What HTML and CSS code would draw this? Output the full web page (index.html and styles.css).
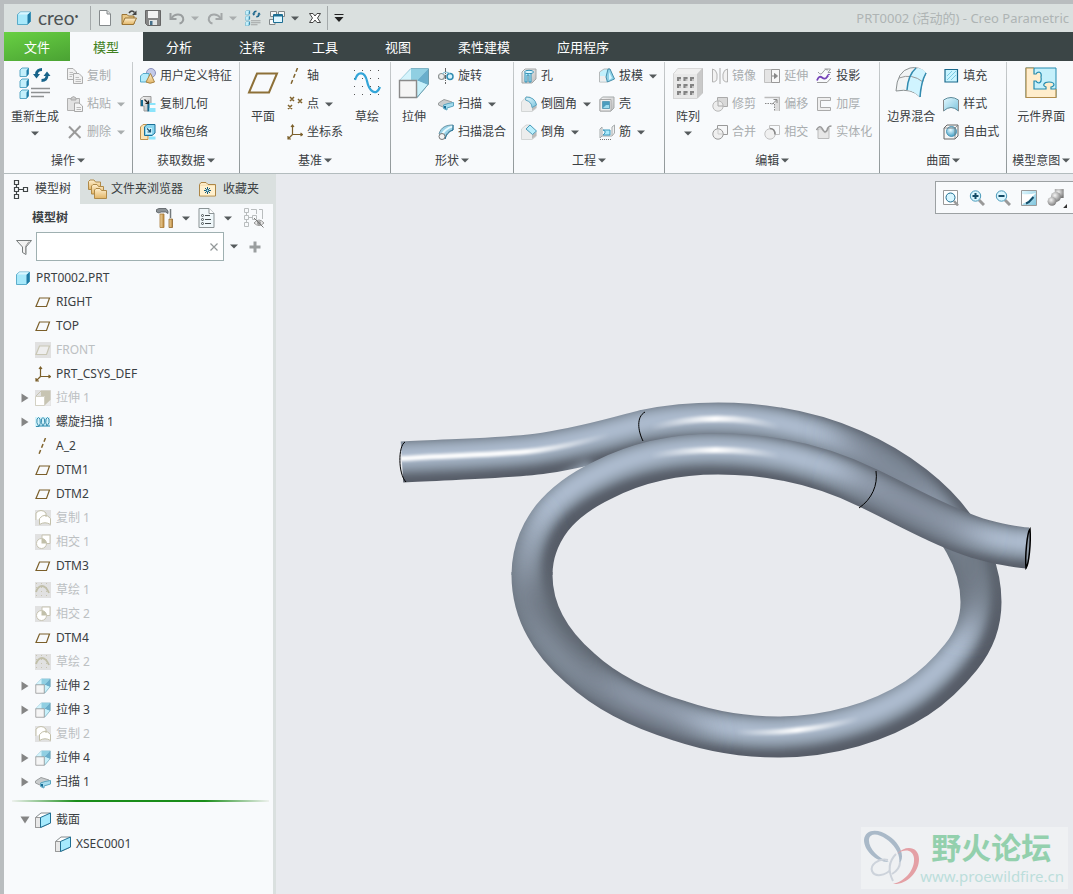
FILE: index.html
```html
<!DOCTYPE html>
<html lang="zh-CN">
<head>
    <meta charset="UTF-8">
    <meta name="viewport" content="width=device-width, initial-scale=1.0">
    <title>PRT0002 (活动的) - Creo Parametric</title>
    <link rel="stylesheet" href="styles.css">
</head>
<body>
    <!-- icon set -->
    <svg class="icon-defs" aria-hidden="true">
        <defs>
            <linearGradient id="gBlue" x1="0" y1="0" x2="1" y2="1"><stop offset="0" stop-color="#e4f9ff"/><stop offset="1" stop-color="#7cc4dd"/></linearGradient>
            <linearGradient id="gGrey" x1="0" y1="0" x2="1" y2="1"><stop offset="0" stop-color="#f6f6f6"/><stop offset="1" stop-color="#bdbdbd"/></linearGradient>
            <linearGradient id="gGold" x1="0" y1="0" x2="0" y2="1"><stop offset="0" stop-color="#fff0d0"/><stop offset="1" stop-color="#e2b566"/></linearGradient>
            <linearGradient id="gWood" x1="0" y1="0" x2="1" y2="0"><stop offset="0" stop-color="#f6dca6"/><stop offset="1" stop-color="#b8853a"/></linearGradient>
            <radialGradient id="gBall" cx=".4" cy=".35" r=".7"><stop offset="0" stop-color="#f4f4f4"/><stop offset="1" stop-color="#777"/></radialGradient>
            <radialGradient id="gAqua" cx=".4" cy=".35" r=".7"><stop offset="0" stop-color="#eafaff"/><stop offset="1" stop-color="#3b9cc4"/></radialGradient>
        </defs>
        <symbol id="i-cube" viewBox="0 0 16 16"><path d="M1.500 4.500L4.500 2H14.500V11.500L11.500 14.500H1.500z" fill="#a8e9fb" stroke="#3f9cbf" stroke-width=".8"/><path d="M11.500 4.500V14.500L14.500 11.500V2z" fill="#1f7ba5"/><path d="M2 4.500L4.700 2.300H14L11.500 4.500z" fill="#d9f6ff"/></symbol>
        <symbol id="i-new" viewBox="0 0 16 16"><path d="M2.500.5H10L13.500 4V15.500H2.500z" fill="#fff" stroke="#858a8c"/><path d="M10 .5V4H13.500" fill="#ddd" stroke="#858a8c"/></symbol>
        <symbol id="i-open" viewBox="0 0 16 16"><path d="M1 14V4.500H6L7.500 6H13V14z" fill="#e9c98a" stroke="#9b7434"/><path d="M1 14.500L4 8H15.500L12.500 14.500z" fill="url(#gGold)" stroke="#9b7434"/><path d="M8 3C10 0 12 .5 13.500 2.500" fill="none" stroke="#444" stroke-width="1.500"/><path d="M15.500 .5V5H11z" fill="#444"/></symbol>
        <symbol id="i-save" viewBox="0 0 16 16"><path d="M.5 .5H15.500V15.500H2.500L.5 13.500z" fill="#858585" stroke="#666"/><path d="M3 1H13V8H3z" fill="#f2f2f2"/><path d="M4 10H12V15H4z" fill="#e0e4e5"/><path d="M5 11H7.500V15H5z" fill="#45708a"/></symbol>
        <symbol id="i-undo" viewBox="0 0 16 16"><path d="M1.500 3V9H7.500" fill="none" stroke="#9a9e9f" stroke-width="2"/><path d="M2.500 8C6 3.500 12 3.500 14 7.500C15 10.500 13 13 10.500 13.500" fill="none" stroke="#9a9e9f" stroke-width="2"/></symbol>
        <symbol id="i-redo" viewBox="0 0 16 16"><path d="M14.500 3V9H8.500" fill="none" stroke="#a3a7a8" stroke-width="2"/><path d="M13.500 8C10 3.500 4 3.500 2 7.500C1 10.500 3 13 5.500 13.500" fill="none" stroke="#a3a7a8" stroke-width="2"/></symbol>
        <symbol id="i-regen" viewBox="0 0 32 32"><g fill="#c3f0fc" stroke="#4a9fbf" stroke-width=".9"><path d="M1 3L3 1H9.500V7L7.500 9.500H1z"/><path d="M1 14L3 12H9.500V18L7.500 20.500H1z"/><path d="M1 25L3 23H9.500V29L7.500 31.500H1z"/></g><path d="M7.500 3.500L9.500 1V7L7.500 9.500zM7.500 14.500L9.500 12V18L7.500 20.500zM7.500 25.500L9.500 23V29L7.500 31.500z" fill="#1f7ba5"/><path d="M17.500 7.500C17.500 4 20 2.500 23 2.500M28 8.500C28 12 25.500 13.500 22.500 13.500" fill="none" stroke="#17638a" stroke-width="2.800"/><path d="M14 7H21L17.500 11.500zM24.500 9H31.500L28 4.500z" fill="#17638a"/><path d="M12 21.500H31M12 25.500H31M12 29.500H25" stroke="#8e9192" stroke-width="1.500"/></symbol>
        <symbol id="i-windows" viewBox="0 0 16 16"><g fill="#f6f6f6" stroke="#818789"><path d="M1.500 1.500H7.500V6.500H1.500zM9.500 1.500H15.500V6.500H9.500zM.5 9.500H6V14.500H.5z"/></g><path d="M4.500 4.500H13.500V12.500H4.500z" fill="#dff6ff" stroke="#1c6d92"/><path d="M5 5H13V6.500H5z" fill="#1c6d92"/></symbol>
        <symbol id="i-close" viewBox="0 0 16 16"><path d="M2.500 3.500H6L8 6L10 3.500H13.500L10.500 8L13.500 12.500H10L8 10L6 12.500H2.500L5.500 8z" fill="#fff" stroke="#444"/></symbol>
        <symbol id="i-more" viewBox="0 0 10 10"><path d="M.5 1.500H9.500" stroke="#222"/><path d="M.5 4H9.500L5 9z" fill="#222"/></symbol>
        <symbol id="i-copy" viewBox="0 0 16 16"><g fill="#f1f1f1" stroke="#adadad"><path d="M.5 .5H6L9.500 4V11.500H.5z"/><path d="M6.500 5.500H12L15.500 9V15.500H6.500z"/></g><path d="M2.500 4.500H6M2.500 6.500H6M2.500 8.500H5M8.500 9.500H12M8.500 11.500H14M8.500 13.500H14" stroke="#bdbdbd"/></symbol>
        <symbol id="i-paste" viewBox="0 0 16 16"><path d="M.5 2.500H12.500V14.500H.5z" fill="#e2e2e2" stroke="#b0b0b0"/><path d="M4 4V2L6.500 .5L9 2V4z" fill="#ccc" stroke="#aaa"/><path d="M7.500 7H12L15.500 10V15.500H7.500z" fill="#f5f5f5" stroke="#a8a8a8"/><path d="M9.500 11.500H14M9.500 13.500H14" stroke="#bbb"/></symbol>
        <symbol id="i-delete" viewBox="0 0 16 16"><path d="M2 2.500L13.500 14M13.500 2L2 14" stroke="#9a9a9a" stroke-width="2"/></symbol>
        <symbol id="i-udf" viewBox="0 0 16 16"><circle cx="11" cy="5" r="4.500" fill="#c3cae9" stroke="#8c92bd"/><path d="M.5 8L3 5.500H9V12L7 14H.5z" fill="#b4ebfb" stroke="#55a9c8"/><path d="M10.500 5.500L14.500 14Q10 16.500 6 14z" fill="url(#gGold)" stroke="#a98545"/></symbol>
        <symbol id="i-copygeo" viewBox="0 0 16 16"><path d="M.5 3L3 .5H11V8.500H8V15H4V10H.5z" fill="url(#gGrey)" stroke="#9b9b9b"/><path d="M1 4H3V10H1zM7.500 6.500H9.500V15.500H7.500z" fill="#14688f"/><path d="M9.500 7H15.500V9H9.500zM9.500 12H15.500V16H9.500z" fill="#8be4fb"/><path d="M4.500 3.500L8.500 7.500M8.500 4.500V7.500H5.500" fill="none" stroke="#222" stroke-width="1.200"/></symbol>
        <symbol id="i-shrink" viewBox="0 0 16 16"><path d="M.5 3L3 .5H8V15.500H.5z" fill="#fbe3b4" stroke="#bd934e"/><path d="M4.500 3L7 .5H15V9L12 11.500H4.500z" fill="#8ad6ef" stroke="#1b7098"/><path d="M6 4H12V10H6z" fill="#d0f3fd"/><path d="M7 4.500L10.500 8M10.500 5V8H7.500" fill="none" stroke="#1b5878" stroke-width="1.200"/><path d="M9 12.500H15.500V15.500H9z" fill="#8be4fb"/></symbol>
        <symbol id="i-plane" viewBox="0 0 32 32"><path d="M10 6.500H30L22 25.500H2z" fill="#f8fafc" stroke="#8d7038" stroke-width="2"/></symbol>
        <symbol id="i-datum" viewBox="0 0 16 16"><path d="M4.500 4H14.500L11.500 12.500H1z" fill="#f8fafc" stroke="#7b5f2a" stroke-width="1.200"/></symbol>
        <symbol id="i-axis" viewBox="0 0 16 16"><path d="M10.500 0L4 16" stroke="#80632d" stroke-width="1.500" stroke-dasharray="4 2.500"/></symbol>
        <symbol id="i-points" viewBox="0 0 16 16"><path d="M3 1L7 5M7 1L3 5M11 3L15 7M15 3L11 7M1 9L5 13M5 9L1 13" stroke="#80632d" stroke-width="1.500"/></symbol>
        <symbol id="i-csys" viewBox="0 0 16 16"><path d="M5.500 1V10.500H15M5.500 10.500L1 15M4 3L5.500 1L7 3M13.500 9L15.500 10.500L13.500 12M1 12V15H4" fill="none" stroke="#7b5f2a" stroke-width="1.200"/></symbol>
        <symbol id="i-sketch" viewBox="0 0 32 32"><path d="M3.500 3V31M11.500 3V31M19.500 3V31M27.500 3V31" stroke="#555" stroke-dasharray="1 7"/><path d="M4 13C7 3 14 5 16 14C18 24 25 30 29 20" fill="none" stroke="#33a5d8" stroke-width="2.200"/></symbol>
        <symbol id="i-extrude" viewBox="0 0 32 32"><path d="M1.500 13.500L13 1.500H30.500V17L19 30.500V13.500z" fill="#c8f1fb" stroke="#7fb4c6"/><path d="M1.500 13.500L13 2H30L19 13.500z" fill="#90cfe2"/><path d="M1.500 13.500L13 2V13.500z" fill="#d5f4fc"/><path d="M19 13.500L30 2V18z" fill="#69aecb"/><path d="M19 13.500L30 18L19.500 30z" fill="#c8f1fb"/><path d="M30.500 2V17L19 30.500" fill="none" stroke="#6d9dad"/><path d="M1.500 13.500H18.500V30.500H1.500z" fill="#f5f5f5" stroke="#8a8a8a" stroke-width="1.400"/></symbol>
        <symbol id="i-revolve" viewBox="0 0 16 16"><circle cx="3.500" cy="8.500" r="3" fill="#eee" stroke="#8e9494" stroke-width="1.200"/><circle cx="12" cy="8.500" r="3" fill="#d8f5ff" stroke="#328cb1" stroke-width="1.500"/><path d="M4 6Q8 2 12 6" fill="none" stroke="#7cb9cf"/><path d="M7.500 0V16" stroke="#666" stroke-dasharray="4 1 1 1"/></symbol>
        <symbol id="i-sweep" viewBox="0 0 16 16"><path d="M.5 7L6 3.500L14 6V9L11 8L6 9L6 11.500L.5 9z" fill="#c9cccd" stroke="#9a9d9e"/><path d="M5.500 9L10 7.500L15.500 6.500V10L9 12V14L5.500 12.500z" fill="#a5dcee" stroke="#5aa5c0"/><path d="M6 10H8V13L6 12z" fill="#176b94"/></symbol>
        <symbol id="i-blend" viewBox="0 0 16 16"><path d="M1 10C3 3 8 1 15 1V6C11 7 8 9 7 15z" fill="#9bd3e8" stroke="#6b95a6"/><path d="M3 10Q6 4 14.500 1.500V3.500Q8 5 5 11z" fill="#e9fbff"/><path d="M15 1V6Q9 8 7 15" fill="none" stroke="#1f6f94"/><circle cx="4" cy="12.500" r="3" fill="#f4f4f4" stroke="#777"/></symbol>
        <symbol id="i-hole" viewBox="0 0 16 16"><path d="M1 4L4 1H15V11L11 15H1z" fill="url(#gGrey)" stroke="#a4a7a7"/><path d="M4 14V5H10V14H8V7H6V14z" fill="#bff1ff" stroke="#318fb5"/><ellipse cx="8" cy="4" rx="4.500" ry="1.700" fill="#dff8ff" stroke="#318fb5"/></symbol>
        <symbol id="i-round" viewBox="0 0 16 16"><path d="M.5 6L5 1H9L15.500 8V12L11 15.500H.5z" fill="#eceded" stroke="#d3d6d6"/><path d="M11 10L15 9V12L11 15z" fill="#bbb"/><path d="M5 1Q14 1 15.500 9L11 11.500Q11 6 4.500 4z" fill="url(#gBlue)" stroke="#5ba6c2"/></symbol>
        <symbol id="i-chamfer" viewBox="0 0 16 16"><path d="M.5 5L5 1H9L15.500 8V12L11 15.500H.5z" fill="#eceded" stroke="#d3d6d6"/><path d="M11 11L15 8V12L11 15z" fill="#bbb"/><path d="M9 1L15.500 7L11.500 10.500L5 5z" fill="#b9effd" stroke="#4b9cbb"/></symbol>
        <symbol id="i-draft" viewBox="0 0 16 16"><path d="M.5 13V4L5 1H11V12L8 14H.5z" fill="#c2f0fc" stroke="#b5b9ba"/><path d="M1 8H7V13.500H1z" fill="#eee"/><path d="M9 1H11L15.500 11L8.500 14L7 9z" fill="#8fd2e8" stroke="#468eaa"/><path d="M10 4V12L13 10z" fill="#d8f7ff"/></symbol>
        <symbol id="i-shell" viewBox="0 0 16 16"><path d="M1 3.500L3.500 1H15V12L12 15H1z" fill="url(#gGrey)" stroke="#a5aaab"/><path d="M1 3.500H12V15H1z" fill="#eee" stroke="#aaa"/><path d="M3.500 5.500H10.500V12.500H3.500z" fill="#4b9cbe" stroke="#5f9fb9"/><path d="M7 9H10V12H4z" fill="#9cdcf0"/></symbol>
        <symbol id="i-rib" viewBox="0 0 16 16"><path d="M1 5L3 3V12L1 14zM3 12H13L15.500 9V1L13 3V11" fill="#f2f2f2" stroke="#a5aaab"/><path d="M4 6H11V11H4L6 9V7z" fill="#aaeafc" stroke="#3998bc"/><path d="M1 15.500H12" stroke="#777" stroke-dasharray="1 1"/></symbol>
        <symbol id="i-pattern" viewBox="0 0 32 32"><path d="M1.500 7L6 1.500H30.500V26L25 31.500H1.500z" fill="#c9c9c9" stroke="#c2c2c2"/><path d="M1.500 7H25V31.500H1.500z" fill="#e8e8e8"/><path d="M1.500 7L6 1.500H30L25 7z" fill="#f0f0f0"/><g fill="#c2c2c2"><path d="M5 10h4v4h-4zM11.500 10h4v4h-4zM18 10h4v4h-4zM5 17h4v4h-4zM11.500 17h4v4h-4zM18 17h4v4h-4zM5 24h4v4h-4zM11.500 24h4v4h-4zM18 24h4v4h-4z"/></g><g fill="#838383"><path d="M5 10h4v2h-2v2h-2zM11.500 10h4v2h-2v2h-2zM18 10h4v2h-2v2h-2zM5 17h4v2h-2v2h-2zM11.500 17h4v2h-2v2h-2zM18 17h4v2h-2v2h-2zM5 24h4v2h-2v2h-2zM11.500 24h4v2h-2v2h-2zM18 24h4v2h-2v2h-2z"/></g></symbol>
        <symbol id="i-mirror" viewBox="0 0 16 16"><path d="M.5 1V14Q5 14 5 10V6Q4 1.500 .5 1zM15.500 1V14Q11 14 11 10V6Q12 1.500 15.500 1z" fill="#f2f2f2" stroke="#b3b3b3"/><path d="M8 0V16" stroke="#aaa"/></symbol>
        <symbol id="i-trim" viewBox="0 0 16 16"><path d="M5.500 1.500H15.500V10.500H5.500z" fill="#d9d9d9" stroke="#aaa"/><circle cx="6" cy="10" r="5.200" fill="#ededed" stroke="#b8b8b8"/><path d="M6 5V10H11" fill="none" stroke="#aaa"/></symbol>
        <symbol id="i-merge" viewBox="0 0 16 16"><path d="M5.500 1.500H15.500V10.500H5.500z" fill="#f6f7f8" stroke="#999"/><circle cx="6" cy="10" r="5.200" fill="#f0f0f0" stroke="#999"/><path d="M6 5V10H11" fill="none" stroke="#ccc"/></symbol>
        <symbol id="i-extend" viewBox="0 0 16 16"><path d="M.5 1.500H15.500V14.500H.5z" fill="#e4e4e4" stroke="#c0c0c0"/><path d="M7.500 1.500H15.500V14.500H7.500z" fill="#f8f8f8" stroke="#999"/><path d="M8 8H11M10.500 5.500L13.500 8L10.500 10.500z" fill="#888" stroke="#888"/></symbol>
        <symbol id="i-offset" viewBox="0 0 16 16"><path d="M.5 1.500H15.500V15" fill="none" stroke="#bbb" stroke-width="1.500"/><path d="M11 5L15 2V15H11z" fill="#ddd"/><path d="M1 7.500H10.500V15" fill="none" stroke="#888" stroke-dasharray="1.500 1"/><path d="M8 8.500L12.500 4M9.500 3.500H13V7" fill="none" stroke="#888"/></symbol>
        <symbol id="i-intersect" viewBox="0 0 16 16"><path d="M5.500 1.500H15.500V10.500H5.500z" fill="none" stroke="#c2c2c2"/><circle cx="6" cy="10" r="5.200" fill="#f0f0f0" stroke="#c2c2c2"/><path d="M6 4.500Q11 4.500 11 10.500" fill="none" stroke="#888" stroke-width="1.500"/></symbol>
        <symbol id="i-project" viewBox="0 0 16 16"><path d="M2 4Q5 8 7 4T12 2M8.500 1H14.500L12 4.500H15" fill="none" stroke="#9a9d9e"/><path d="M1 12.500Q3 7 6 9.500T11 9T13 7" fill="none" stroke="#7442b8" stroke-width="1.800"/><path d="M1 14.500H11L15 10" fill="none" stroke="#999"/></symbol>
        <symbol id="i-thicken" viewBox="0 0 16 16"><path d="M14.500 1.500H1.500V14.500H14.500V11.500H4.500V4.500H14.500z" fill="#efefef" stroke="#aaa"/></symbol>
        <symbol id="i-solidify" viewBox="0 0 16 16"><path d="M2 6Q5 3 7 7T12 6L13 4V14.500H2z" fill="#e7e7e7" stroke="#bbb"/><path d="M.5 6Q4 0 6.500 5T11 6Q12 2 15.500 2" fill="none" stroke="#999" stroke-width="1.600"/></symbol>
        <symbol id="i-boundary" viewBox="0 0 32 32"><path d="M1 24Q2 4 15 1Q24 -1 31 6Q26 15 25 30Q17 21 1 24z" fill="#f2f4f5" stroke="#8b9192"/><path d="M15 10Q19 3 23 1Q29 2 31 6Q26 15 25 30Q19 24 12 23Q12 15 15 10z" fill="#d0f4ff"/><path d="M4 11Q17 6 28 15" fill="none" stroke="#999"/><path d="M12 23Q13 8 21 1M31 6Q26 15 25 30" fill="none" stroke="#318bb0" stroke-width="1.500"/></symbol>
        <symbol id="i-fill" viewBox="0 0 16 16"><path d="M2 1.500H14.500V14H2z" fill="#c8f4ff" stroke="#19688b" stroke-width="1.200"/><path d="M4 8L9 3M4 12L13 3M8 12L13 7" stroke="#7ccbe3"/></symbol>
        <symbol id="i-style" viewBox="0 0 16 16"><path d="M.5 4Q8-1 15.500 4V15Q8 8 .5 15z" fill="url(#gBlue)" stroke="#5c8999"/><path d="M.5 4V15M15.500 4V15" stroke="#888"/></symbol>
        <symbol id="i-freestyle" viewBox="0 0 16 16"><path d="M1 4L4 1H15V12L12 15H1z" fill="#f5f5f5" stroke="#666"/><circle cx="8.500" cy="7.500" r="5" fill="url(#gAqua)" stroke="#3489ad" stroke-width=".8"/><path d="M1 4H12V15M12 4L15 1" fill="none" stroke="#777" stroke-width=".8"/></symbol>
        <symbol id="i-puzzle" viewBox="0 0 32 32"><path d="M1 1H31V30.500H1z" fill="#c5f0fb" stroke="#238aaf"/><path d="M1 1H9V6H11Q16 4 16 10Q16 16 11 14H9V22H20V20Q17 15 23 15Q30 15 27 20V22H31V30.500H1z" fill="#ffedcc"/><path d="M9 1V7H11Q12 5 14 5Q17 6 16 10Q17 15 14 16Q12 16 11 14H9V22H21V20Q18 19 19 17Q20 15 24 15Q29 15 29 18Q28 20 26 20V22H31" fill="none" stroke="#238aaf" stroke-width="1.200"/><path d="M9 1H1V30.500H31V22" fill="none" stroke="#b28d4c" stroke-width="1.200"/></symbol>
        <symbol id="i-refit" viewBox="0 0 16 16"><path d="M.5 .5H14.500V14.500H.5z" fill="#fff" stroke="#999"/><path d="M11 11L15 15.500" stroke="#999" stroke-width="2.500"/><circle cx="7.500" cy="7.500" r="4.500" fill="#d9f6ff" stroke="#1d6d90"/></symbol>
        <symbol id="i-zoomin" viewBox="0 0 16 16"><path d="M10 10L15 15" stroke="#999" stroke-width="3"/><circle cx="6.500" cy="6" r="5.200" fill="#d9f6ff" stroke="#4b9bbb"/><path d="M3.500 6H9.500M6.500 3V9" stroke="#134b66" stroke-width="2"/></symbol>
        <symbol id="i-zoomout" viewBox="0 0 16 16"><path d="M10 10L15 15" stroke="#999" stroke-width="3"/><circle cx="6.500" cy="6" r="5.200" fill="#d9f6ff" stroke="#4b9bbb"/><path d="M3.500 6H9.500" stroke="#134b66" stroke-width="2"/></symbol>
        <symbol id="i-repaint" viewBox="0 0 16 16"><path d="M.5 .5H15.500V15.500H.5z" fill="url(#gBlue)" stroke="#999"/><path d="M1 4Q8 5 15 3L11 7L5 13Q3 12 1 15z" fill="#fff"/><path d="M5 13.500L8 12L12.500 7" fill="none" stroke="#144e6b" stroke-width="2"/></symbol>
        <symbol id="i-shading" viewBox="0 0 18 18"><path d="M7 1H15V9H7z" fill="url(#gBall)"/><circle cx="8" cy="8" r="4.500" fill="url(#gBall)"/><circle cx="4.500" cy="12" r="4" fill="url(#gBall)"/><path d="M18 14.500V18H14.500z" fill="#333"/></symbol>
        <symbol id="i-tree" viewBox="0 0 16 20"><g fill="none" stroke="#3f4445" stroke-width="1.200"><path d="M1.500 1.500H5.500V5.500H1.500zM1.500 8.500H5.500V12.500H1.500zM1.500 15.500H5.500V19.500H1.500zM10.500 8.500H14.500V12.500H10.500zM3.500 5.500V8.500M3.500 12.500V15.500M5.500 10.500H10.500"/></g></symbol>
        <symbol id="i-folders" viewBox="0 0 20 20"><g fill="url(#gGold)" stroke="#b08a48"><path d="M.5 2.500L2 1H6L7.500 3H12.500V10.500H.5z"/><path d="M3.500 7L5 5.500H9L10.500 7.500H15.500V15H3.500z"/><path d="M6.500 11L8 9.500H12L13.500 11.500H18.500V19.500H6.500z"/></g></symbol>
        <symbol id="i-favorite" viewBox="0 0 18 18"><path d="M.5 4.500L2 2.500H7L9 4.500H16.500V16H.5z" fill="url(#gGold)" stroke="#ad8646"/><path d="M1 6H16V15.500H1z" fill="#fff0ce"/><path d="M5 10.500H12M8.500 7V14M6 8L11 13M11 8L6 13" stroke="#145b7c"/><circle cx="8.500" cy="10.500" r="1" fill="#bff1ff"/></symbol>
        <symbol id="i-settings" viewBox="0 0 18 20"><path d="M.5 1.500L3 .5H10L12 3V5.500L9.500 4H5L3 5L.5 4z" fill="#8c9296" stroke="#555c60" stroke-width=".8"/><path d="M4 6H8V19.500H4z" fill="url(#gWood)" stroke="#a87a35" stroke-width=".8"/><path d="M14.500 1V10" stroke="#73797c" stroke-width="1.500"/><path d="M13 11H16.500V19.500H13z" fill="url(#gWood)" stroke="#8f672f" stroke-width=".8"/></symbol>
        <symbol id="i-list" viewBox="0 0 18 20"><path d="M1 .5H11L16 5.500V19.500H1z" fill="#f0f8fb" stroke="#8b9395"/><path d="M11 .5V5.500H16" fill="#fff" stroke="#8b9395"/><path d="M7 7.500H12M7 11.500H13M7 15.500H13" stroke="#454d50"/><g fill="none" stroke="#454d50"><circle cx="4.500" cy="7.500" r="1"/><circle cx="4.500" cy="11.500" r="1"/><circle cx="4.500" cy="15.500" r="1"/></g></symbol>
        <symbol id="i-hide" viewBox="0 0 20 20"><g fill="none" stroke="#b9bdbe"><path d="M.5 .5H4.500V4.500H.5zM.5 7.500H4.500V11.500H.5zM.5 14.500H4.500V18.500H.5zM8.500 7.500H12.500V11.500H8.500zM2.500 5V7M2.500 12V14M4.500 9.500H8.500M7 1.500H12.500V6M15 1.500H18.500V11"/></g><path d="M10 15Q15 9 20 15Q15 20 10 15z" fill="#e6e6e6" stroke="#999"/><circle cx="15" cy="15" r="2" fill="#999"/><path d="M10 10L19.500 19.500" stroke="#777"/></symbol>
        <symbol id="i-filter" viewBox="0 0 16 16"><path d="M.5 1.500H15.500L10 8V15.500L6.500 13.500V8z" fill="#f2f2f2" stroke="#777c7d"/><path d="M13 2.500L9.500 7.500V14" fill="none" stroke="#999"/></symbol>
        <symbol id="i-clear" viewBox="0 0 10 10"><path d="M1.500 1.500L8.500 8.500M8.500 1.500L1.500 8.500" stroke="#929899" stroke-width="1.200"/></symbol>
        <symbol id="i-plus" viewBox="0 0 12 12"><path d="M6 .5V11.500M.5 6H11.500" stroke="#9a9e9f" stroke-width="3"/></symbol>
        <symbol id="i-arrow" viewBox="0 0 8 5"><path d="M0 .5H8L4 4.500z" fill="currentColor"/></symbol>
        <symbol id="i-expand" viewBox="0 0 10 10"><path d="M1.500 .5V9.500L8.500 5z" fill="#858585"/></symbol>
        <symbol id="i-collapse" viewBox="0 0 10 10"><path d="M.5 1.500H9.500L5 8.500z" fill="#858585"/></symbol>
        <symbol id="i-datum-off" viewBox="0 0 16 16"><path d="M0 0H16V16H0z" fill="#e1e1e1"/><path d="M4.500 4H14.500L11.500 12.500H1z" fill="#eee" stroke="#c9c7b5" stroke-width="1.200"/></symbol>
        <symbol id="i-extrude-off" viewBox="0 0 16 16"><path d="M0 0H16V16H0z" fill="#e1e1e1"/><path d="M6 .5H15.500V10L10 15V6H6z" fill="#c7c4b2"/><path d="M10 15.500L15.500 10V15.500z" fill="#ececec"/><path d="M1 6L6 1" stroke="#c7c4b2"/><path d="M.5 6.500H9.500V15.500H.5z" fill="#fff" stroke="#d3d1c4"/></symbol>
        <symbol id="i-copy-off" viewBox="0 0 16 16"><path d="M0 0H16V16H0z" fill="#e1e1e1"/><path d="M1 10V3Q6-2 11 3V7M4.500 14.500V8.500Q10 2 15.500 8.500V14.500Q10 11 4.500 14.500z" fill="#fff" stroke="#c2bfa9"/></symbol>
        <symbol id="i-intersect-off" viewBox="0 0 16 16"><path d="M0 0H16V16H0z" fill="#e1e1e1"/><path d="M7 1H15V9.500H12L7 5z" fill="#fff" stroke="#c7c4b2"/><circle cx="6.500" cy="9.500" r="5" fill="#fff" stroke="#c7c4b2"/><path d="M6.500 4.500V9.500H11.500Q11 5 6.500 4.500z" fill="#c1bfa9"/></symbol>
        <symbol id="i-sketch-off" viewBox="0 0 16 16"><path d="M0 0H16V16H0z" fill="#e1e1e1"/><path d="M1.500 1V16M6.500 1V16M11.500 1V16" stroke="#c7c4b2" stroke-dasharray="1 3"/><path d="M1 10Q3 4 7 4T14 11" fill="none" stroke="#c1bfa9" stroke-width="1.800"/></symbol>
        <symbol id="i-helix" viewBox="0 0 16 16"><path d="M0 3H15V13H0z" fill="#d4f2fa"/><path d="M1 12.500H4Q6 10 5 5Q3.500 2 2 5Q1 9 3.500 12H8Q10.500 9 9.500 5Q8 2 6.500 5Q5.500 9 8 12H12Q15 9 14 5Q12.500 2 11 5Q10 9 12 12H15" fill="none" stroke="#388eaf"/></symbol>
        <symbol id="i-section" viewBox="0 0 16 16"><path d="M.5 5.500L6 1H15.500V11L5.500 15.500H.5z" fill="#fff" stroke="#858c8e"/><path d="M.5 5.500H5.500V15.500H.5z" fill="#e8e8e8" stroke="#999"/><path d="M5.500 5.500L15.500 1V11L5.500 15.500z" fill="#a6eafd" stroke="#206f93"/></symbol>
    </svg>

    <div class="window">
        <header class="titlebar">
            <div class="brand"><svg class="icon"><use href="#i-cube"/></svg><span class="brand-name">creo<sup>•</sup></span></div>
            <div class="quick">
                <button aria-label="新建"><svg class="icon"><use href="#i-new"/></svg></button>
                <button aria-label="打开"><svg class="icon"><use href="#i-open"/></svg></button>
                <button aria-label="保存"><svg class="icon"><use href="#i-save"/></svg></button>
                <button class="split off" aria-label="撤消"><svg class="icon"><use href="#i-undo"/></svg><svg class="arrow"><use href="#i-arrow"/></svg></button>
                <button class="split off" aria-label="重做"><svg class="icon"><use href="#i-redo"/></svg><svg class="arrow"><use href="#i-arrow"/></svg></button>
                <button aria-label="重新生成模型"><svg class="icon"><use href="#i-regen"/></svg></button>
                <button class="split" aria-label="窗口"><svg class="icon"><use href="#i-windows"/></svg><svg class="arrow"><use href="#i-arrow"/></svg></button>
                <button aria-label="关闭"><svg class="icon"><use href="#i-close"/></svg></button>
            </div>
            <button class="customize" aria-label="自定义"><svg class="more"><use href="#i-more"/></svg></button>
            <h1 class="doc-title">PRT0002 (活动的) - Creo Parametric</h1>
        </header>

        <nav class="tabs">
            <button class="tab file">文件</button>
            <button class="tab active">模型</button>
            <button class="tab">分析</button>
            <button class="tab">注释</button>
            <button class="tab">工具</button>
            <button class="tab">视图</button>
            <button class="tab">柔性建模</button>
            <button class="tab">应用程序</button>
        </nav>

        <section class="ribbon">
            <div class="group">
                <div class="tools">
                    <button class="big"><svg><use href="#i-regen"/></svg>重新生成<svg class="arrow"><use href="#i-arrow"/></svg></button>
                    <div class="col">
                        <button class="tool off"><svg class="icon"><use href="#i-copy"/></svg>复制</button>
                        <button class="tool off"><svg class="icon"><use href="#i-paste"/></svg>粘贴<svg class="arrow"><use href="#i-arrow"/></svg></button>
                        <button class="tool off"><svg class="icon"><use href="#i-delete"/></svg>删除<svg class="arrow"><use href="#i-arrow"/></svg></button>
                    </div>
                </div>
                <button class="group-name">操作<svg class="arrow"><use href="#i-arrow"/></svg></button>
            </div>
            <div class="group">
                <div class="tools">
                    <div class="col">
                        <button class="tool"><svg class="icon"><use href="#i-udf"/></svg>用户定义特征</button>
                        <button class="tool"><svg class="icon"><use href="#i-copygeo"/></svg>复制几何</button>
                        <button class="tool"><svg class="icon"><use href="#i-shrink"/></svg>收缩包络</button>
                    </div>
                </div>
                <button class="group-name">获取数据<svg class="arrow"><use href="#i-arrow"/></svg></button>
            </div>
            <div class="group">
                <div class="tools">
                    <button class="big"><svg><use href="#i-plane"/></svg>平面</button>
                    <div class="col">
                        <button class="tool"><svg class="icon"><use href="#i-axis"/></svg>轴</button>
                        <button class="tool"><svg class="icon"><use href="#i-points"/></svg>点<svg class="arrow"><use href="#i-arrow"/></svg></button>
                        <button class="tool"><svg class="icon"><use href="#i-csys"/></svg>坐标系</button>
                    </div>
                    <button class="big"><svg><use href="#i-sketch"/></svg>草绘</button>
                </div>
                <button class="group-name">基准<svg class="arrow"><use href="#i-arrow"/></svg></button>
            </div>
            <div class="group">
                <div class="tools">
                    <button class="big"><svg><use href="#i-extrude"/></svg>拉伸</button>
                    <div class="col">
                        <button class="tool"><svg class="icon"><use href="#i-revolve"/></svg>旋转</button>
                        <button class="tool"><svg class="icon"><use href="#i-sweep"/></svg>扫描<svg class="arrow"><use href="#i-arrow"/></svg></button>
                        <button class="tool"><svg class="icon"><use href="#i-blend"/></svg>扫描混合</button>
                    </div>
                </div>
                <button class="group-name">形状<svg class="arrow"><use href="#i-arrow"/></svg></button>
            </div>
            <div class="group">
                <div class="tools">
                    <div class="col">
                        <button class="tool"><svg class="icon"><use href="#i-hole"/></svg>孔</button>
                        <button class="tool"><svg class="icon"><use href="#i-round"/></svg>倒圆角<svg class="arrow"><use href="#i-arrow"/></svg></button>
                        <button class="tool"><svg class="icon"><use href="#i-chamfer"/></svg>倒角<svg class="arrow"><use href="#i-arrow"/></svg></button>
                    </div>
                    <div class="col">
                        <button class="tool"><svg class="icon"><use href="#i-draft"/></svg>拔模<svg class="arrow"><use href="#i-arrow"/></svg></button>
                        <button class="tool"><svg class="icon"><use href="#i-shell"/></svg>壳</button>
                        <button class="tool"><svg class="icon"><use href="#i-rib"/></svg>筋<svg class="arrow"><use href="#i-arrow"/></svg></button>
                    </div>
                </div>
                <button class="group-name">工程<svg class="arrow"><use href="#i-arrow"/></svg></button>
            </div>
            <div class="group">
                <div class="tools">
                    <button class="big"><svg><use href="#i-pattern"/></svg>阵列<svg class="arrow"><use href="#i-arrow"/></svg></button>
                    <div class="col">
                        <button class="tool off"><svg class="icon"><use href="#i-mirror"/></svg>镜像</button>
                        <button class="tool off"><svg class="icon"><use href="#i-trim"/></svg>修剪</button>
                        <button class="tool off"><svg class="icon"><use href="#i-merge"/></svg>合并</button>
                    </div>
                    <div class="col">
                        <button class="tool off"><svg class="icon"><use href="#i-extend"/></svg>延伸</button>
                        <button class="tool off"><svg class="icon"><use href="#i-offset"/></svg>偏移</button>
                        <button class="tool off"><svg class="icon"><use href="#i-intersect"/></svg>相交</button>
                    </div>
                    <div class="col">
                        <button class="tool"><svg class="icon"><use href="#i-project"/></svg>投影</button>
                        <button class="tool off"><svg class="icon"><use href="#i-thicken"/></svg>加厚</button>
                        <button class="tool off"><svg class="icon"><use href="#i-solidify"/></svg>实体化</button>
                    </div>
                </div>
                <button class="group-name">编辑<svg class="arrow"><use href="#i-arrow"/></svg></button>
            </div>
            <div class="group">
                <div class="tools">
                    <button class="big"><svg><use href="#i-boundary"/></svg>边界混合</button>
                    <div class="col">
                        <button class="tool"><svg class="icon"><use href="#i-fill"/></svg>填充</button>
                        <button class="tool"><svg class="icon"><use href="#i-style"/></svg>样式</button>
                        <button class="tool"><svg class="icon"><use href="#i-freestyle"/></svg>自由式</button>
                    </div>
                </div>
                <button class="group-name">曲面<svg class="arrow"><use href="#i-arrow"/></svg></button>
            </div>
            <div class="group last">
                <div class="tools">
                    <button class="big"><svg><use href="#i-puzzle"/></svg>元件界面</button>
                </div>
                <button class="group-name">模型意图<svg class="arrow"><use href="#i-arrow"/></svg></button>
            </div>
        </section>

        <main class="workspace">
            <aside class="sidebar">
                <nav class="side-tabs">
                    <button class="side-tab active"><svg class="tree-icon"><use href="#i-tree"/></svg>模型树</button>
                    <button class="side-tab"><svg class="side-icon"><use href="#i-folders"/></svg>文件夹浏览器</button>
                    <button class="side-tab"><svg class="fav-icon"><use href="#i-favorite"/></svg>收藏夹</button>
                </nav>
                <div class="panel">
                    <div class="panel-head">
                        <h2>模型树</h2>
                        <button aria-label="设置"><svg class="side-icon"><use href="#i-settings"/></svg><svg class="arrow"><use href="#i-arrow"/></svg></button>
                        <button aria-label="显示"><svg class="side-icon"><use href="#i-list"/></svg><svg class="arrow"><use href="#i-arrow"/></svg></button>
                        <button class="hide" aria-label="隐藏"><svg class="side-icon"><use href="#i-hide"/></svg></button>
                    </div>
                    <div class="search">
                        <svg class="icon"><use href="#i-filter"/></svg>
                        <div class="search-box">
                            <input type="text" aria-label="搜索模型树">
                            <button aria-label="清除"><svg class="more"><use href="#i-clear"/></svg></button>
                        </div>
                        <button aria-label="搜索选项"><svg class="arrow"><use href="#i-arrow"/></svg></button>
                        <button aria-label="添加"><svg class="add"><use href="#i-plus"/></svg></button>
                    </div>
                    <ul class="tree">
                        <li class="root"><svg class="icon"><use href="#i-cube"/></svg>PRT0002.PRT</li>
                        <li><svg class="icon"><use href="#i-datum"/></svg>RIGHT</li>
                        <li><svg class="icon"><use href="#i-datum"/></svg>TOP</li>
                        <li class="off"><svg class="icon"><use href="#i-datum-off"/></svg>FRONT</li>
                        <li><svg class="icon"><use href="#i-csys"/></svg>PRT_CSYS_DEF</li>
                        <li class="off parent"><button aria-label="展开"><svg class="more"><use href="#i-expand"/></svg></button><svg class="icon"><use href="#i-extrude-off"/></svg>拉伸 1</li>
                        <li class="parent"><button aria-label="展开"><svg class="more"><use href="#i-expand"/></svg></button><svg class="icon"><use href="#i-helix"/></svg>螺旋扫描 1</li>
                        <li><svg class="icon"><use href="#i-axis"/></svg>A_2</li>
                        <li><svg class="icon"><use href="#i-datum"/></svg>DTM1</li>
                        <li><svg class="icon"><use href="#i-datum"/></svg>DTM2</li>
                        <li class="off"><svg class="icon"><use href="#i-copy-off"/></svg>复制 1</li>
                        <li class="off"><svg class="icon"><use href="#i-intersect-off"/></svg>相交 1</li>
                        <li><svg class="icon"><use href="#i-datum"/></svg>DTM3</li>
                        <li class="off"><svg class="icon"><use href="#i-sketch-off"/></svg>草绘 1</li>
                        <li class="off"><svg class="icon"><use href="#i-intersect-off"/></svg>相交 2</li>
                        <li><svg class="icon"><use href="#i-datum"/></svg>DTM4</li>
                        <li class="off"><svg class="icon"><use href="#i-sketch-off"/></svg>草绘 2</li>
                        <li class="parent"><button aria-label="展开"><svg class="more"><use href="#i-expand"/></svg></button><svg class="icon"><use href="#i-extrude"/></svg>拉伸 2</li>
                        <li class="parent"><button aria-label="展开"><svg class="more"><use href="#i-expand"/></svg></button><svg class="icon"><use href="#i-extrude"/></svg>拉伸 3</li>
                        <li class="off"><svg class="icon"><use href="#i-copy-off"/></svg>复制 2</li>
                        <li class="parent"><button aria-label="展开"><svg class="more"><use href="#i-expand"/></svg></button><svg class="icon"><use href="#i-extrude"/></svg>拉伸 4</li>
                        <li class="parent"><button aria-label="展开"><svg class="more"><use href="#i-expand"/></svg></button><svg class="icon"><use href="#i-sweep"/></svg>扫描 1</li>
                    </ul>
                    <hr class="insert-line">
                    <ul class="tree">
                        <li class="parent"><button aria-label="折叠"><svg class="more"><use href="#i-collapse"/></svg></button><svg class="icon"><use href="#i-section"/></svg>截面</li>
                        <li class="child"><svg class="icon"><use href="#i-section"/></svg>XSEC0001</li>
                    </ul>
                </div>
            </aside>

            <section class="viewport">
                <svg class="model" viewBox="276 174 797 720" preserveAspectRatio="xMinYMin meet" role="img" aria-label="PRT0002">
                    <defs>
                        <filter id="soft2" filterUnits="userSpaceOnUse" x="276" y="300" width="797" height="560"><feGaussianBlur stdDeviation="1.500"/></filter>
                        <filter id="soft4" filterUnits="userSpaceOnUse" x="276" y="300" width="797" height="560"><feGaussianBlur stdDeviation="4"/></filter>
                        <filter id="soft6" filterUnits="userSpaceOnUse" x="276" y="300" width="797" height="560"><feGaussianBlur stdDeviation="5"/></filter>
                        <filter id="soft20" filterUnits="userSpaceOnUse" x="276" y="300" width="797" height="560"><feGaussianBlur stdDeviation="18"/></filter>
                        <linearGradient id="shineEnd" gradientUnits="userSpaceOnUse" x1="400" y1="0" x2="610" y2="0"><stop offset="0" stop-color="#fff"/><stop offset=".6" stop-color="#fff"/><stop offset="1" stop-color="#fff" stop-opacity="0"/></linearGradient>
                        <linearGradient id="shineTop" gradientUnits="userSpaceOnUse" x1="650" y1="0" x2="780" y2="0"><stop offset="0" stop-color="#fff" stop-opacity="0"/><stop offset=".5" stop-color="#fff"/><stop offset="1" stop-color="#fff" stop-opacity="0"/></linearGradient>
                        <linearGradient id="shineBottom" gradientUnits="userSpaceOnUse" x1="735" y1="0" x2="860" y2="0"><stop offset="0" stop-color="#fff" stop-opacity="0"/><stop offset=".5" stop-color="#fff"/><stop offset="1" stop-color="#fff" stop-opacity="0"/></linearGradient>
                        <!-- centre lines, each running on past the join at the far left of the loop -->
                        <path id="backLine" d="M350 464L402 462C450 459 505 459 545 453C585 447 615 438 645 430C670 425 695 423 718 423C770 423 815 433 854 450C900 470 935 500 953 525C970 548 981 575 981 602C981 623 974 641 961 657C949 672 935 686 917 698C880 722 830 737 778 737C745 737 710 731 680 721C640 709 605 691 580 668C550 642 532 612 532 575C532 553 539 535 552 518C565 502 582 490 603 480"/>
                        <path id="frontLine" d="M680 721C640 709 605 691 580 668C550 642 532 612 532 575C532 553 539 535 552 518C565 502 582 490 603 480C640 461 680 454 718 454C775 454 825 467 868 488C900 503 940 526 977 538C995 543 1012 547 1028 548L1070 551"/>
                        <mask id="backMask" maskUnits="userSpaceOnUse" x="276" y="300" width="797" height="560"><path d="M402 462C450 459 505 459 545 453C585 447 615 438 645 430C670 425 695 423 718 423C770 423 815 433 854 450C900 470 935 500 953 525C970 548 981 575 981 602C981 623 974 641 961 657C949 672 935 686 917 698C880 722 830 737 778 737C745 737 710 731 680 721C640 709 605 691 580 668C550 642 532 612 532 575V572" fill="none" stroke="#fff" stroke-width="41"/></mask>
                        <mask id="frontMask" maskUnits="userSpaceOnUse" x="276" y="300" width="797" height="560"><path d="M532 575C532 553 539 535 552 518C565 502 582 490 603 480C640 461 680 454 718 454C775 454 825 467 868 488C900 503 940 526 977 538C995 543 1012 547 1028 548" fill="none" stroke="#fff" stroke-width="41"/></mask>
                        <!-- parts of the loop that face away from the light -->
                        <g id="shadow" filter="url(#soft20)" fill="#636b76">
                            <ellipse cx="565" cy="630" rx="32" ry="70" transform="rotate(-40 565 630)" opacity=".85"/>
                            <ellipse cx="520" cy="570" rx="22" ry="60" opacity=".5"/>
                            <ellipse cx="640" cy="715" rx="70" ry="28" transform="rotate(24 640 715)" opacity=".6"/>
                        </g>
                    </defs>
                    <g mask="url(#backMask)" fill="none">
                        <path d="M276 300H1073V860H276z" fill="#565c67"/>
                        <g filter="url(#soft4)"><use href="#backLine" x="-8" y="-5" stroke="#8794a3" stroke-width="34"/></g>
                        <g filter="url(#soft6)"><use href="#backLine" x="-6" y="-6" stroke="#adbccf" stroke-width="18"/></g>
                        <use href="#shadow"/>
                        <g filter="url(#soft20)" fill="#636b76"><ellipse cx="970" cy="565" rx="34" ry="60" opacity=".85"/><ellipse cx="895" cy="465" rx="70" ry="28" transform="rotate(38 895 465)" opacity=".7"/></g>
                        <g filter="url(#soft2)"><path d="M396 459C450 455 505 455 540 450C570 446 590 440 612 434" stroke="url(#shineEnd)" stroke-width="5"/><path d="M650 428Q718 410 780 427" stroke="url(#shineTop)" stroke-width="6"/><path d="M735 732Q800 735 860 718" stroke="url(#shineBottom)" stroke-width="5"/></g>
                    </g>
                    <g mask="url(#frontMask)" fill="none">
                        <path d="M276 300H1073V860H276z" fill="#565c67"/>
                        <g filter="url(#soft4)"><use href="#frontLine" x="-8" y="-5" stroke="#8794a3" stroke-width="34"/></g>
                        <g filter="url(#soft6)"><use href="#frontLine" x="-6" y="-6" stroke="#adbccf" stroke-width="18"/></g>
                        <use href="#shadow"/>
                        <g filter="url(#soft20)" fill="#636b76"><ellipse cx="910" cy="508" rx="75" ry="28" transform="rotate(25 910 508)" opacity=".6"/></g>
                        <g filter="url(#soft2)"><path d="M650 456Q718 444 780 456" stroke="url(#shineTop)" stroke-width="6"/></g>
                    </g>
                    <g fill="none" stroke="#000">
                        <path d="M405 442C398 446 398 474 406 482M645 412C636 417 638 431 643 441"/>
                        <path d="M876 471C878 485 872 499 859 508"/>
                        <path d="M1030 529C1027 533 1025 556 1026 568C1029 564 1031 542 1030 529z" fill="#8f9aa6" stroke-width="1.500"/>
                    </g>
                </svg>

                <div class="view-tools">
                    <button aria-label="重新调整"><svg class="icon"><use href="#i-refit"/></svg></button>
                    <button aria-label="放大"><svg class="icon"><use href="#i-zoomin"/></svg></button>
                    <button aria-label="缩小"><svg class="icon"><use href="#i-zoomout"/></svg></button>
                    <button aria-label="重画"><svg class="icon"><use href="#i-repaint"/></svg></button>
                    <button aria-label="显示样式"><svg class="side-icon"><use href="#i-shading"/></svg></button>
                </div>

                <div class="watermark">
                    <svg class="mark-logo" viewBox="0 0 58 56"><path d="M27 32C13 32 2 20 2 10C3-1 16-2 27 6C38 13 44 27 37 34C39 25 33 15 24 9C16 3 8 3 7 9C6 18 16 28 27 32z" fill="#a9b9c8"/><path d="M35 24C44 14 57 17 57 29C57 43 44 55 31 54C44 51 53 39 52 28C51 20 43 18 35 24z" fill="#e4a0a5"/><path d="M26 30C16 28 8 35 10 41C13 48 24 45 28 40M34 24C26 32 26 41 31 51M38 32C38 38 35 41 30 44" fill="none" stroke="#cdd3db" stroke-width="2"/></svg>
                    <div class="mark-text"><strong>野火论坛</strong><span>www.proewildfire.cn</span></div>
                </div>
            </section>
        </main>
    </div>
</body>
</html>
```
FILE: styles.css
```css
* {
    margin: 0;
    padding: 0;
    box-sizing: border-box;
}
body {
    font-family: "Noto Sans", "Noto Sans CJK SC", sans-serif;
    font-size: 12px;
    line-height: 16px;
    color: #3b4043;
    background: #e8eaee;
}
button {
    font: inherit;
    color: inherit;
    background: none;
    border: none;
    cursor: pointer;
    display: flex;
    align-items: center;
    white-space: nowrap;
}
svg {
    display: block;
    flex-shrink: 0;
}
.icon-defs {
    position: absolute;
    width: 0;
    height: 0;
}
.icon {
    width: 16px;
    height: 16px;
}
.arrow {
    width: 8px;
    height: 5px;
    color: #555a5c;
}
.off .arrow {
    color: #a9adae;
}
.more {
    width: 10px;
    height: 10px;
}
.window {
    min-height: 100vh;
    display: flex;
    flex-direction: column;
    border: solid #b9bdbf;
    border-width: 4px 0 0 4px;
    overflow: hidden;
}

/* title bar */
.titlebar {
    height: 28px;
    display: flex;
    align-items: center;
    background: #dae0df;
}
.brand {
    display: flex;
    align-items: center;
    gap: 6px;
    width: 87px;
    height: 24px;
    padding-left: 12px;
    border-right: 1px solid #a4a9aa;
}
.brand-name {
    font-family: Lato, sans-serif;
    font-size: 19px;
    color: #4c5254;
}
.brand-name sup {
    font-size: 7px;
    vertical-align: 6px;
    line-height: 0;
}
.quick {
    display: flex;
    align-items: center;
    gap: 8px;
    height: 24px;
    padding: 0 4px 0 6px;
    border-right: 1px solid #a4a9aa;
}
.split {
    gap: 6px;
}
.customize {
    margin-left: 6px;
}
.doc-title {
    margin-left: auto;
    padding-right: 4px;
    font-size: 13px;
    font-weight: normal;
    color: #aeb4b4;
    white-space: nowrap;
}

/* ribbon tabs */
.tabs {
    display: flex;
    height: 29px;
    background: #3b4546;
}
.tab {
    padding: 0 24px 0 23px;
    font-size: 13px;
    color: #fff;
}
.tab.file {
    padding: 0 20px;
    background: linear-gradient(165deg, #68d043, #4aa233);
}
.tab.active {
    background: #f8fafc;
    color: #3f8020;
}

/* ribbon */
.ribbon {
    display: flex;
    height: 113px;
    padding-top: 1px;
    background: #f8fafc;
    border-bottom: 1px solid #b3bcbe;
}
.group {
    flex-shrink: 0;
    display: flex;
    flex-direction: column;
    padding: 0 7px;
    border-right: 1px solid;
    border-image: linear-gradient(#c9cdcf, #8f9698) 1;
}
.group.last {
    padding: 0 5px;
    border: none;
}
.last .tools {
    justify-content: center;
}
.tools {
    display: flex;
    gap: 8px;
    height: 84px;
}
.big {
    flex-direction: column;
    min-width: 32px;
    padding-top: 5px;
}
.big svg {
    width: 32px;
    height: 32px;
    margin-bottom: 10px;
}
.big .arrow {
    width: 8px;
    height: 5px;
    margin: 6px 0 0;
}
.tool {
    height: 28px;
    gap: 4px;
}
.tool .arrow {
    margin-left: 2px;
}
.tool.off {
    color: #a9adaf;
}
.group-name {
    flex: 1;
    gap: 2px;
    padding-top: 2px;
    align-self: center;
}

/* sidebar */
.workspace {
    flex: 1;
    display: flex;
}
.sidebar {
    width: 272px;
    flex-shrink: 0;
    background: #f8fafc;
    border-right: 3px solid #dae0df;
}
.side-tabs {
    display: flex;
    height: 30px;
    background: #dae0df;
}
.side-tab {
    padding: 0 8px;
    gap: 3px;
}
.side-tab.active {
    background: #f8fafc;
    padding: 0 9px;
    gap: 6px;
}
.tree-icon {
    width: 16px;
    height: 20px;
}
.side-icon {
    width: 20px;
    height: 20px;
}
.fav-icon {
    width: 18px;
    height: 18px;
    margin-right: 3px;
}
.panel-head {
    display: flex;
    align-items: center;
    height: 28px;
    padding: 0 9px 0 28px;
    gap: 7px;
}
.panel-head h2 {
    flex: 1;
    font-size: 12px;
}
.panel-head button {
    gap: 7px;
}
.panel-head .hide {
    margin-left: 5px;
}
.search {
    display: flex;
    align-items: center;
    padding: 0 12px;
    gap: 4px;
}
.search-box {
    flex: 1;
    min-width: 0;
    display: flex;
    height: 29px;
    margin-right: 2px;
    padding-right: 4px;
    background: #fff;
    border: 1px solid #9fb0b1;
}
.search-box input {
    flex: 1;
    min-width: 0;
    padding: 0 4px;
    font: inherit;
    border: none;
    background: none;
    outline: none;
}
.add {
    width: 12px;
    height: 12px;
    margin-left: 7px;
}
.tree {
    padding-top: 5px;
    list-style: none;
}
.tree li {
    display: flex;
    align-items: center;
    gap: 5px;
    height: 24px;
    padding-left: 31px;
}
.tree .root {
    padding-left: 11px;
}
.tree .parent {
    padding-left: 16px;
}
.tree .child {
    padding-left: 51px;
}
.tree .off {
    color: #bcc0c2;
}
.insert-line {
    height: 2px;
    margin: 6px 4px 1px 8px;
    border: none;
    background: linear-gradient(90deg, #eef1ee, #1a8d1a 25%, #1a8d1a 75%, #eef1ee);
}

/* graphics area */
.viewport {
    flex: 1;
    position: relative;
    background: #e8eaee;
    overflow: hidden;
}
.model {
    width: 100%;
}
.view-tools {
    position: absolute;
    top: 7px;
    right: 0;
    display: flex;
    align-items: center;
    gap: 10px;
    height: 33px;
    padding: 0 6px 0 7px;
    background: #f8fafc;
    border: 1px solid #9ca1a3;
    border-right: none;
}
.watermark {
    position: absolute;
    right: 5px;
    bottom: 5px;
    display: flex;
    align-items: center;
    padding: 3px 4px 3px 1px;
    background: #eff1f3;
}
.mark-logo {
    width: 58px;
    height: 56px;
}
.mark-text {
    display: flex;
    flex-direction: column;
    color: #bcdedb;
    font-size: 15px;
    line-height: 20px;
}
.mark-text strong {
    padding-left: 11px;
    font-size: 30px;
    line-height: 36px;
    color: #93d0ad;
}
```
